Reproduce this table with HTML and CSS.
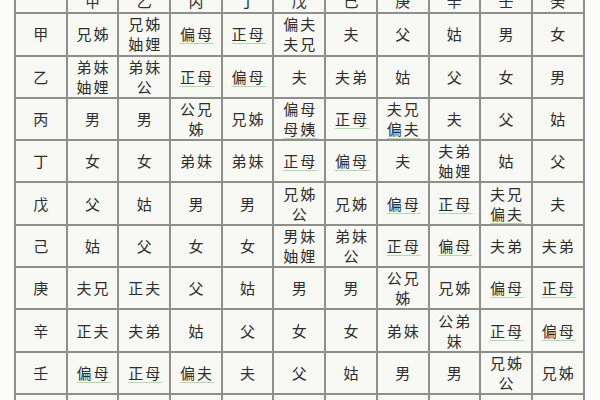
FILE: index.html
```html
<!DOCTYPE html>
<html lang="zh">
<head>
<meta charset="utf-8">
<title>十天干六亲表</title>
<link rel="stylesheet" href="styles.css">
</head>
<body>
<div class="page">
  <div class="grid">
    <div class="cell head"></div>
    <div class="cell head"><span>甲</span></div>
    <div class="cell head"><span>乙</span></div>
    <div class="cell head"><span>丙</span></div>
    <div class="cell head"><span>丁</span></div>
    <div class="cell head"><span>戊</span></div>
    <div class="cell head"><span>己</span></div>
    <div class="cell head"><span>庚</span></div>
    <div class="cell head"><span>辛</span></div>
    <div class="cell head"><span>壬</span></div>
    <div class="cell head"><span>癸</span></div>

    <div class="cell"><span>甲</span></div>
    <div class="cell"><span>兄姊</span></div>
    <div class="cell"><span>兄姊</span><span>妯娌</span></div>
    <div class="cell"><span class="u">偏母</span></div>
    <div class="cell"><span class="u">正母</span></div>
    <div class="cell"><span>偏夫</span><span>夫兄</span></div>
    <div class="cell"><span>夫</span></div>
    <div class="cell"><span>父</span></div>
    <div class="cell"><span>姑</span></div>
    <div class="cell"><span>男</span></div>
    <div class="cell"><span>女</span></div>

    <div class="cell"><span>乙</span></div>
    <div class="cell"><span>弟妹</span><span>妯娌</span></div>
    <div class="cell"><span>弟妹</span><span>公</span></div>
    <div class="cell"><span class="u">正母</span></div>
    <div class="cell"><span class="u">偏母</span></div>
    <div class="cell"><span>夫</span></div>
    <div class="cell"><span>夫弟</span></div>
    <div class="cell"><span>姑</span></div>
    <div class="cell"><span>父</span></div>
    <div class="cell"><span>女</span></div>
    <div class="cell"><span>男</span></div>

    <div class="cell"><span>丙</span></div>
    <div class="cell"><span>男</span></div>
    <div class="cell"><span>男</span></div>
    <div class="cell"><span>公兄</span><span>姊</span></div>
    <div class="cell"><span>兄姊</span></div>
    <div class="cell"><span>偏母</span><span class="u">母姨</span></div>
    <div class="cell"><span class="u">正母</span></div>
    <div class="cell"><span>夫兄</span><span class="u">偏夫</span></div>
    <div class="cell"><span>夫</span></div>
    <div class="cell"><span>父</span></div>
    <div class="cell"><span>姑</span></div>

    <div class="cell"><span>丁</span></div>
    <div class="cell"><span>女</span></div>
    <div class="cell"><span>女</span></div>
    <div class="cell"><span>弟妹</span></div>
    <div class="cell"><span>弟妹</span></div>
    <div class="cell"><span class="u">正母</span></div>
    <div class="cell"><span class="u">偏母</span></div>
    <div class="cell"><span>夫</span></div>
    <div class="cell"><span>夫弟</span><span>妯娌</span></div>
    <div class="cell"><span>姑</span></div>
    <div class="cell"><span>父</span></div>

    <div class="cell"><span>戊</span></div>
    <div class="cell"><span>父</span></div>
    <div class="cell"><span>姑</span></div>
    <div class="cell"><span>男</span></div>
    <div class="cell"><span>男</span></div>
    <div class="cell"><span>兄姊</span><span>公</span></div>
    <div class="cell"><span>兄姊</span></div>
    <div class="cell"><span class="u">偏母</span></div>
    <div class="cell"><span class="u">正母</span></div>
    <div class="cell"><span>夫兄</span><span class="u">偏夫</span></div>
    <div class="cell"><span>夫</span></div>

    <div class="cell"><span>己</span></div>
    <div class="cell"><span>姑</span></div>
    <div class="cell"><span>父</span></div>
    <div class="cell"><span>女</span></div>
    <div class="cell"><span>女</span></div>
    <div class="cell"><span>男妹</span><span>妯娌</span></div>
    <div class="cell"><span>弟妹</span><span>公</span></div>
    <div class="cell"><span class="u">正母</span></div>
    <div class="cell"><span class="u">偏母</span></div>
    <div class="cell"><span>夫弟</span></div>
    <div class="cell"><span>夫弟</span></div>

    <div class="cell"><span>庚</span></div>
    <div class="cell"><span>夫兄</span></div>
    <div class="cell"><span>正夫</span></div>
    <div class="cell"><span>父</span></div>
    <div class="cell"><span>姑</span></div>
    <div class="cell"><span>男</span></div>
    <div class="cell"><span>男</span></div>
    <div class="cell"><span>公兄</span><span>姊</span></div>
    <div class="cell"><span>兄姊</span></div>
    <div class="cell"><span class="u">偏母</span></div>
    <div class="cell"><span class="u">正母</span></div>

    <div class="cell"><span>辛</span></div>
    <div class="cell"><span>正夫</span></div>
    <div class="cell"><span>夫弟</span></div>
    <div class="cell"><span>姑</span></div>
    <div class="cell"><span>父</span></div>
    <div class="cell"><span>女</span></div>
    <div class="cell"><span>女</span></div>
    <div class="cell"><span>弟妹</span></div>
    <div class="cell"><span>公弟</span><span>妹</span></div>
    <div class="cell"><span class="u">正母</span></div>
    <div class="cell"><span class="u">偏母</span></div>

    <div class="cell"><span>壬</span></div>
    <div class="cell"><span class="u">偏母</span></div>
    <div class="cell"><span class="u">正母</span></div>
    <div class="cell"><span class="u">偏夫</span></div>
    <div class="cell"><span>夫</span></div>
    <div class="cell"><span>父</span></div>
    <div class="cell"><span>姑</span></div>
    <div class="cell"><span>男</span></div>
    <div class="cell"><span>男</span></div>
    <div class="cell"><span>兄姊</span><span>公</span></div>
    <div class="cell"><span>兄姊</span></div>

    <div class="cell"><span>癸</span></div>
    <div class="cell"><span class="u">正母</span></div>
    <div class="cell"><span class="u">偏母</span></div>
    <div class="cell"><span>夫</span></div>
    <div class="cell"><span>姑</span></div>
    <div class="cell"><span>偏夫</span></div>
    <div class="cell"><span>父</span></div>
    <div class="cell"><span>女</span></div>
    <div class="cell"><span>女</span></div>
    <div class="cell"><span>弟妹</span></div>
    <div class="cell"><span>弟妹</span></div>
  </div>
</div>
</body>
</html>
```

FILE: styles.css
```css
html, body {
  margin: 0;
  padding: 0;
  background: #fbfbf9;
  overflow: hidden;
}

.page {
  width: 600px;
  height: 400px;
  overflow: hidden;
  padding-left: 14px;
  box-sizing: border-box;
}

.grid {
  display: grid;
  grid-template-columns: repeat(11, 49.7px);
  grid-auto-rows: 40.3px;
  gap: 2px;
  padding: 2px;
  width: max-content;
  background: #8e8e8b;
  margin-top: -30px;
}

.cell {
  background: #f8f8f5;
  display: flex;
  flex-direction: column;
  align-items: center;
  justify-content: center;
  font-family: "Noto Sans CJK SC", "Noto Sans CJK JP", sans-serif;
  font-size: 15px;
  line-height: 20px;
  color: #2e2e2c;
}

.cell span {
  letter-spacing: 2px;
  padding-left: 2px;
}

.cell.head {
  justify-content: flex-end;
  padding-bottom: 1px;
  box-sizing: border-box;
}

.u {
  text-decoration: underline;
  text-decoration-color: #b4d9a8;
  text-decoration-thickness: 1px;
  text-underline-offset: 3px;
}
```
